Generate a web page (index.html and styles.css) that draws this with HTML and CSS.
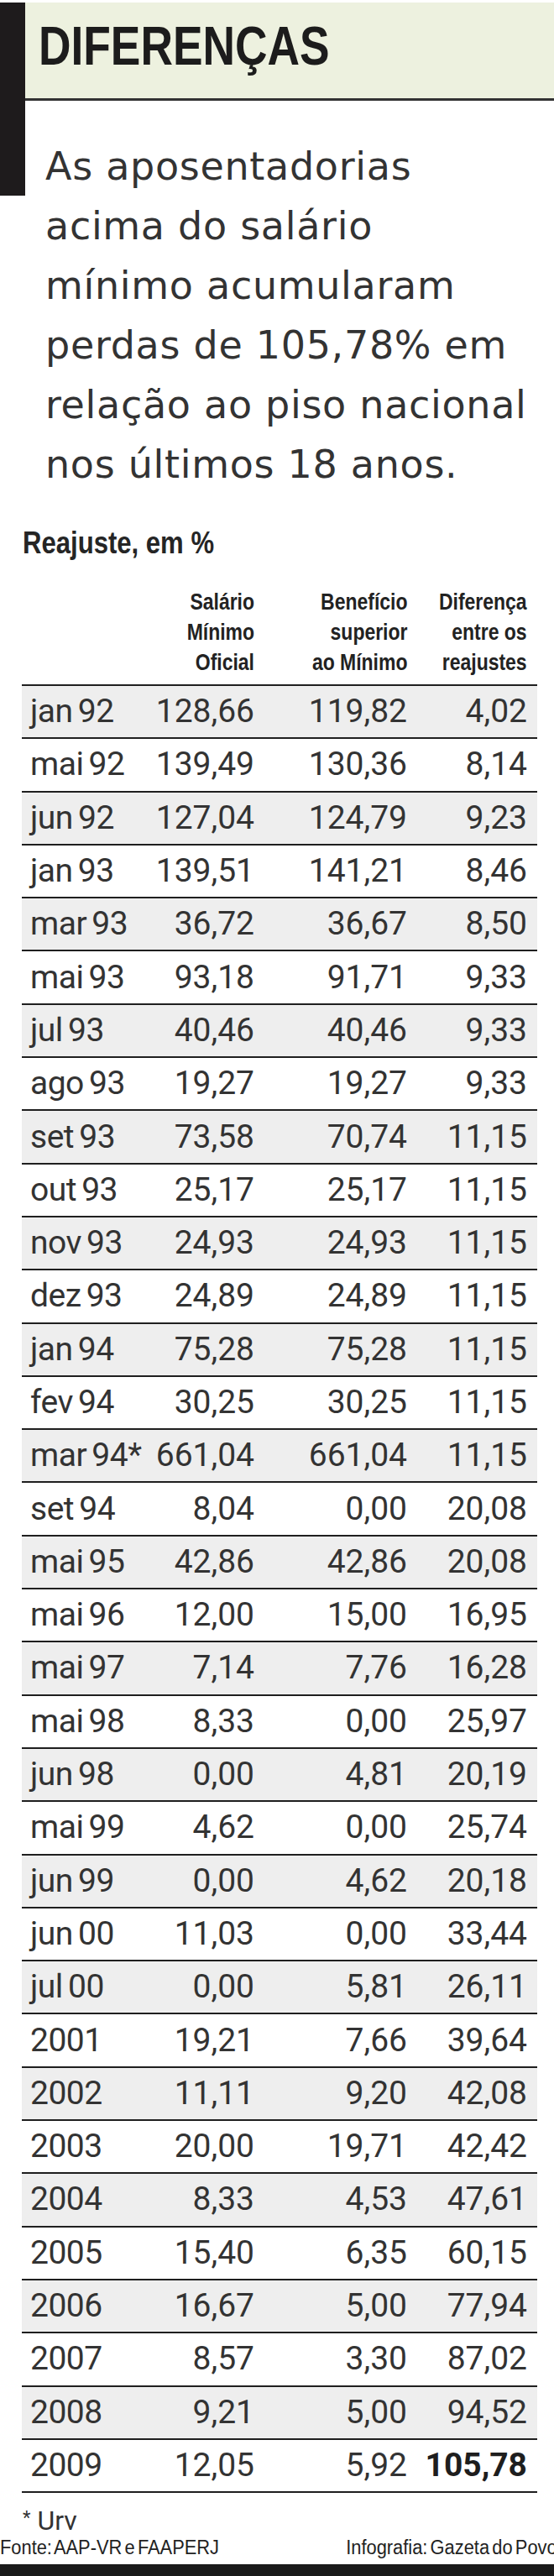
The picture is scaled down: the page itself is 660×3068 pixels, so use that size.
FILE: index.html
```html
<html>
	<head>
		<meta charset="utf-8">
		<link rel="stylesheet" href="styles.css">
	</head>
	<body>
		<div class="page">
			<div class="intro">
				<div class="intro__bar"></div>
				<div class="intro__main">
					<h1 class="title"><span class="narrow">DIFERENÇAS</span></h1>
					<p class="lead">As aposentadorias<br>acima do salário<br>mínimo acumularam<br>perdas de 105,78% em<br>relação ao piso nacional<br>nos últimos 18 anos.</p>
				</div>
			</div>
			<div class="caption"><span class="narrow">Reajuste, em %</span></div>
			<div class="grid">
				<div class="grid__head">
					<div></div>
					<div><span class="narrow">Salário<br>Mínimo<br>Oficial</span></div>
					<div><span class="narrow">Benefício<br>superior<br>ao Mínimo</span></div>
					<div><span class="narrow">Diferença<br>entre os<br>reajustes</span></div>
				</div>
				<div class="grid__row"><div>jan 92</div><div>128,66</div><div>119,82</div><div>4,02</div></div>
				<div class="grid__row"><div>mai 92</div><div>139,49</div><div>130,36</div><div>8,14</div></div>
				<div class="grid__row"><div>jun 92</div><div>127,04</div><div>124,79</div><div>9,23</div></div>
				<div class="grid__row"><div>jan 93</div><div>139,51</div><div>141,21</div><div>8,46</div></div>
				<div class="grid__row"><div>mar 93</div><div>36,72</div><div>36,67</div><div>8,50</div></div>
				<div class="grid__row"><div>mai 93</div><div>93,18</div><div>91,71</div><div>9,33</div></div>
				<div class="grid__row"><div>jul 93</div><div>40,46</div><div>40,46</div><div>9,33</div></div>
				<div class="grid__row"><div>ago 93</div><div>19,27</div><div>19,27</div><div>9,33</div></div>
				<div class="grid__row"><div>set 93</div><div>73,58</div><div>70,74</div><div>11,15</div></div>
				<div class="grid__row"><div>out 93</div><div>25,17</div><div>25,17</div><div>11,15</div></div>
				<div class="grid__row"><div>nov 93</div><div>24,93</div><div>24,93</div><div>11,15</div></div>
				<div class="grid__row"><div>dez 93</div><div>24,89</div><div>24,89</div><div>11,15</div></div>
				<div class="grid__row"><div>jan 94</div><div>75,28</div><div>75,28</div><div>11,15</div></div>
				<div class="grid__row"><div>fev 94</div><div>30,25</div><div>30,25</div><div>11,15</div></div>
				<div class="grid__row"><div>mar 94*</div><div>661,04</div><div>661,04</div><div>11,15</div></div>
				<div class="grid__row"><div>set 94</div><div>8,04</div><div>0,00</div><div>20,08</div></div>
				<div class="grid__row"><div>mai 95</div><div>42,86</div><div>42,86</div><div>20,08</div></div>
				<div class="grid__row"><div>mai 96</div><div>12,00</div><div>15,00</div><div>16,95</div></div>
				<div class="grid__row"><div>mai 97</div><div>7,14</div><div>7,76</div><div>16,28</div></div>
				<div class="grid__row"><div>mai 98</div><div>8,33</div><div>0,00</div><div>25,97</div></div>
				<div class="grid__row"><div>jun 98</div><div>0,00</div><div>4,81</div><div>20,19</div></div>
				<div class="grid__row"><div>mai 99</div><div>4,62</div><div>0,00</div><div>25,74</div></div>
				<div class="grid__row"><div>jun 99</div><div>0,00</div><div>4,62</div><div>20,18</div></div>
				<div class="grid__row"><div>jun 00</div><div>11,03</div><div>0,00</div><div>33,44</div></div>
				<div class="grid__row"><div>jul 00</div><div>0,00</div><div>5,81</div><div>26,11</div></div>
				<div class="grid__row"><div>2001</div><div>19,21</div><div>7,66</div><div>39,64</div></div>
				<div class="grid__row"><div>2002</div><div>11,11</div><div>9,20</div><div>42,08</div></div>
				<div class="grid__row"><div>2003</div><div>20,00</div><div>19,71</div><div>42,42</div></div>
				<div class="grid__row"><div>2004</div><div>8,33</div><div>4,53</div><div>47,61</div></div>
				<div class="grid__row"><div>2005</div><div>15,40</div><div>6,35</div><div>60,15</div></div>
				<div class="grid__row"><div>2006</div><div>16,67</div><div>5,00</div><div>77,94</div></div>
				<div class="grid__row"><div>2007</div><div>8,57</div><div>3,30</div><div>87,02</div></div>
				<div class="grid__row"><div>2008</div><div>9,21</div><div>5,00</div><div>94,52</div></div>
				<div class="grid__row"><div>2009</div><div>12,05</div><div>5,92</div><div class="grid__total">105,78</div></div>
			</div>
			<div class="note"><span class="note__star">*</span> Urv</div>
			<div class="credits">
				<span class="narrow">Fonte: AAP-VR e FAAPERJ</span>
				<span class="narrow credits__right">Infografia: Gazeta do Povo</span>
			</div>
			<div class="base-bar"></div>
		</div>
	</body>
</html>
```

FILE: styles.css
```css
body {
	margin: 0;
	background: #fff;
	color: #2b2b2b;
	font-family: "DejaVu Sans", sans-serif;
}
.page {
	width: 660px;
	padding-top: 3px;
	overflow: hidden;
}
/* condensed type: Liberation Sans squeezed sideways */
.narrow {
	display: inline-block;
	font-family: "Liberation Sans", Arial, sans-serif;
	transform: scaleX(0.82);
	transform-origin: left center;
}
.intro {
	display: flex;
	align-items: flex-start;
}
.intro__bar {
	flex: 0 0 30px;
	height: 230px;
	background: #1e1b1c;
}
.intro__main {
	flex: 1;
}
.title {
	margin: 0;
	height: 117px;
	box-sizing: border-box;
	padding: 19px 0 0 16px;
	background: #edf1df;
	border-bottom: 3px solid #333;
	font-weight: bold;
	font-size: 65px;
	line-height: 1;
	color: #1c1c1c;
	white-space: nowrap;
}
.lead {
	margin: 43px 0 0 24px;
	font-size: 46px;
	line-height: 71px;
	letter-spacing: 0.7px;
	color: #333;
}
.caption {
	margin: 38px 0 0 27px;
	font-weight: bold;
	font-size: 37px;
	line-height: 40px;
	color: #252525;
	white-space: nowrap;
}
.caption .narrow {
	transform: scaleX(0.84);
}
.grid {
	margin: 32px 0 0 26px;
	width: 614px;
}
.grid__head,
.grid__row {
	display: grid;
	grid-template-columns: 120px 147px 182px 143px;
	padding: 0 12px 0 10px;
	border-bottom: 2px solid #1f1f1f;
	box-sizing: border-box;
}
.grid__head {
	padding-bottom: 8px;
	font-weight: bold;
	font-size: 28px;
	line-height: 36px;
	color: #222;
	text-align: right;
}
.grid__head .narrow {
	transform-origin: right center;
	white-space: nowrap;
}
.grid__row {
	height: 63.3px;
	align-items: center;
	font-family: Roboto, sans-serif;
	font-size: 39px;
	line-height: 1;
	color: #333;
	text-align: right;
}
.grid__row:nth-child(even) {
	background: #eeeeee;
}
.grid__row div:first-child {
	text-align: left;
	word-spacing: -3px;
	letter-spacing: -0.5px;
	white-space: nowrap;
}
.grid__total {
	font-weight: bold;
	color: #1e1e1e;
}
.note {
	margin: 17px 0 0 27px;
	font-family: Roboto, sans-serif;
	font-size: 32px;
	line-height: 26px;
	color: #333;
}
.note__star {
	font-size: 22px;
	vertical-align: 7px;
}
.credits {
	display: flex;
	justify-content: space-between;
	margin: 9px -4px 0 0;
	font-size: 23px;
	line-height: 20px;
	word-spacing: -3px;
	color: #222;
	white-space: nowrap;
}
.credits .narrow {
	transform: scaleX(0.95);
}
.credits .credits__right {
	transform-origin: right center;
}
.base-bar {
	margin-top: 10px;
	height: 16px;
	background: #1a1a1a;
}
```
